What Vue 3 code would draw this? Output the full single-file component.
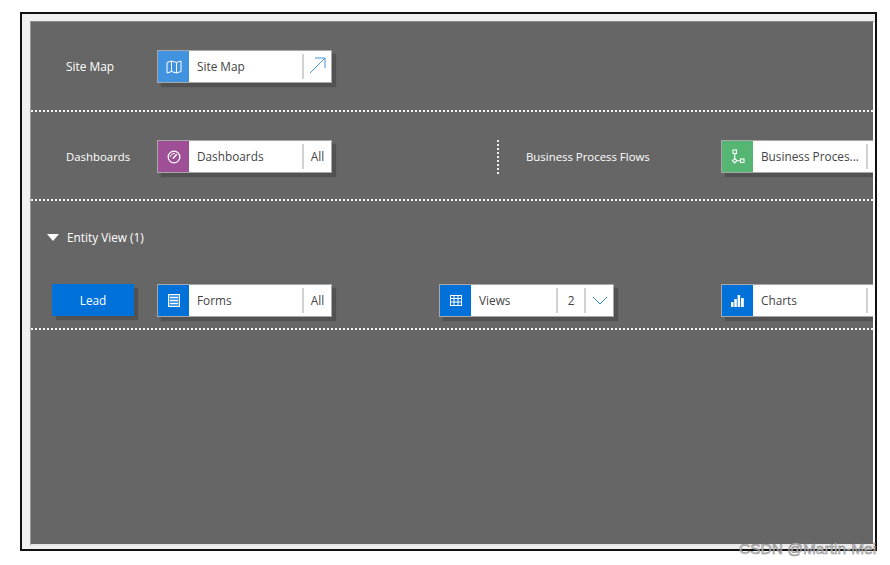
<script setup>
const sections = { entity: 'Entity View (1)' }
</script>

<template>
  <div class="page">
    <div class="frame">
      <div class="canvas">
        <section class="row row-site">
          <span class="label label-wide">Site Map</span>
          <div class="tile">
            <span class="ico blue">
              <svg width="16" height="14" viewBox="0 0 16 14" fill="none" stroke="#fff" stroke-width="1"><path d="M1 2.500 5.500 1l5 1.500L15 1v10.500L10.500 13l-5-1.500L1 13zM5.500 1v10.500M10.500 2.500V13"/></svg>
            </span>
            <span class="name">Site Map</span>
            <span class="end">
              <svg class="arrow" width="17" height="17" viewBox="0 0 17 17" fill="none" stroke="#2f8ae0" stroke-width=".9"><path d="M1 16 16 1M6 1h10v10"/></svg>
            </span>
          </div>
        </section>

        <section class="row row-dash">
          <span class="label">Dashboards</span>
          <div class="tile">
            <span class="ico purple">
              <svg width="14" height="14" viewBox="0 0 14 14" fill="none" stroke="#fff" stroke-width="1.300"><circle cx="7" cy="7" r="5.800"/><path d="M5.800 8.500 9.800 4.200" stroke-width="1.500"/><path d="M3.500 7a3.500 3.500 0 0 1 4.500-3.300" stroke-width="1"/></svg>
            </span>
            <span class="name">Dashboards</span>
            <span class="end end-text">All</span>
          </div>
          <span class="vdots"></span>
          <span class="label label-bpf">Business Process Flows</span>
          <div class="tile">
            <span class="ico green">
              <svg width="14" height="16" viewBox="0 0 14 16" fill="none" stroke="#fff" stroke-width="1.100"><rect x="2" y="1" width="3.500" height="3.500"/><rect x="9.500" y="10" width="3.500" height="3.500"/><path d="M3.750 9.500 6 11.750 3.750 14 1.500 11.750zM3.750 4.500v5M6 11.750h3.500"/></svg>
            </span>
            <span class="name">Business Proces...</span>
            <span class="end"></span>
          </div>
        </section>

        <section class="entity">
          <div class="entity-head">
            <span class="triangle"></span>
            <span class="entity-title">{{ sections.entity }}</span>
          </div>
          <div class="entity-row">
            <button class="lead">Lead</button>
            <div class="tile">
              <span class="ico azure">
                <svg width="12" height="13" viewBox="0 0 12 13" fill="none"><rect x=".5" y=".5" width="11" height="12" fill="#4f9ee8" stroke="#fff"/><path d="M2 3.500h8M2 6.500h8M2 9.500h8" stroke="#fff" stroke-width="1.200"/></svg>
              </span>
              <span class="name">Forms</span>
              <span class="end end-text">All</span>
            </div>
            <div class="tile tile-views">
              <span class="ico azure">
                <svg width="12" height="11" viewBox="0 0 12 11" fill="none" stroke="#fff" stroke-width="1"><rect x=".5" y=".5" width="11" height="10"/><path d="M.5 3.500h11M.5 7h11M4 .5v10M8 .5v10"/></svg>
              </span>
              <span class="name">Views</span>
              <span class="end end-count">2</span>
              <span class="end end-chevron">
                <svg width="16" height="9" viewBox="0 0 16 9" fill="none" stroke="#2f8ae0" stroke-width="1"><path d="M1 1l7 7 7-7"/></svg>
              </span>
            </div>
            <div class="tile">
              <span class="ico azure">
                <svg width="13" height="12" viewBox="0 0 13 12" fill="#fff"><rect x="0" y="7" width="2.500" height="5"/><rect x="3.300" y="4" width="2.500" height="8"/><rect x="6.600" y="0" width="2.500" height="12"/><rect x="10" y="3" width="2.800" height="9"/></svg>
              </span>
              <span class="name">Charts</span>
              <span class="end"></span>
            </div>
          </div>
        </section>
      </div>
    </div>
    <span class="mark">CSDN @Martin-Mei</span>
  </div>
</template>

<style>
html, body { margin: 0; background: #fff; }
</style>

<style scoped>
.page {
  position: relative;
  box-sizing: border-box;
  height: 565px;
  padding: 12px 0 0 20px;
}
.frame {
  box-sizing: border-box;
  width: 857px;
  height: 539px;
  padding: 7px 0 3px 8px;
  border: 2px solid #111;
  background: #f0f0f0;
  font-family: "Open Sans", "Noto Sans", sans-serif;
}
.canvas {
  box-sizing: border-box;
  height: 100%;
  overflow: hidden;
  background: #666;
  border-left: 1px solid #999;
  border-top: 1px solid #8c8c8c;
  border-right: 2px solid #fff;
  border-bottom: 2px solid #e8e8e8;
  color: #fff;
  font-size: 11.400px;
}
.row {
  display: flex;
  align-items: flex-start;
  box-sizing: border-box;
  padding-left: 35px;
  border-bottom: 2px dotted #f4f4f4;
}
.row-site { height: 90px; padding-top: 28px; }
.row-dash { height: 89px; padding-top: 28px; }
.label { width: 91px; flex: none; line-height: 33px; }
.label-wide { font-size: 11.900px; }
.label-bpf { width: 195px; }
.tile {
  display: flex;
  flex: none;
  box-sizing: border-box;
  width: 175px;
  height: 33px;
  border: 1px solid #a8a8a8;
  background: #fff;
  color: #444;
  font-size: 11.800px;
  box-shadow: 4px 4px 1px #525252;
}
.ico {
  display: flex;
  flex: none;
  align-items: center;
  justify-content: center;
  width: 31px;
}
.blue { background: #4193e0; }
.purple { background: #9e4f96; }
.green { background: #55b673; }
.azure { background: #0071d9; }
.name {
  flex: 1;
  min-width: 0;
  padding-left: 8px;
  line-height: 31px;
  white-space: nowrap;
}
.end {
  display: flex;
  flex: none;
  align-items: center;
  justify-content: center;
  box-sizing: border-box;
  width: 29px;
  margin: 3px 0;
  border-left: 2px solid #d2d2d2;
  line-height: 25px;
}
.arrow { margin-top: -2px; }
.end-count { width: 28px; }
.vdots {
  flex: none;
  width: 0;
  height: 34px;
  margin-left: 165px;
  margin-right: 27px;
  border-left: 2px dotted #eee;
}
.entity {
  box-sizing: border-box;
  height: 129px;
  border-bottom: 2px dotted #f4f4f4;
}
.entity-head {
  display: flex;
  align-items: center;
  height: 18px;
  padding: 27px 0 0 16px;
  font-size: 11.800px;
}
.triangle {
  width: 0;
  height: 0;
  margin-right: 8px;
  border-left: 6.500px solid transparent;
  border-right: 6.500px solid transparent;
  border-top: 7px solid #fff;
}
.entity-row {
  display: flex;
  padding: 38px 0 0 21px;
}
.lead {
  flex: none;
  width: 82px;
  height: 32px;
  margin-right: 23px;
  padding: 0;
  border: 0;
  background: #0071d9;
  color: #fff;
  font: inherit;
  font-size: 11.800px;
  box-shadow: 4px 4px 1px #525252;
}
.entity-row .tile { margin-right: 107px; }
.mark {
  position: absolute;
  left: 739px;
  top: 541px;
  color: rgba(205, 205, 205, .85);
  -webkit-text-stroke: .5px #808080;
  font: 15.500px/16px "Liberation Sans", sans-serif;
  white-space: nowrap;
}
</style>
